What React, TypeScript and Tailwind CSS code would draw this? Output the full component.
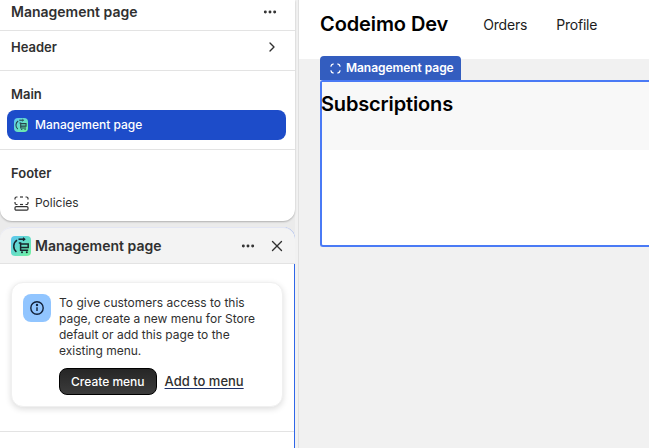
import { X, ChevronRight, MoreHorizontal } from 'lucide-react'

function AppIcon({ size, dark = false }: { size: number; dark?: boolean }) {
  const stroke = dark ? '#27424a' : '#17242b'
  return (
    <div className="flex items-center justify-center bg-gradient-to-br from-[#5cc4f0] to-[#72f29a] rounded-[4px]" style={{ width: size, height: size }}>
      <svg width={size} height={size} viewBox="0 0 20 20" fill="none" stroke={stroke} strokeWidth="1.5">
        <path d="M6 4.2a7.2 7.2 0 0 0-.6 11.6" />
        <path d="M7.5 3.2h5.5" />
        <path d="M12 1.7l1.8 1.5-1.8 1.5" strokeWidth="1.2" />
        <path d="M7.8 7h1.8v7.2h7.6" />
        <path d="M9.6 8h7.6v3.6h-7.6" />
        <circle cx="11" cy="16.2" r="1" fill={stroke} stroke="none" />
        <circle cx="15.8" cy="16.2" r="1" fill={stroke} stroke="none" />
      </svg>
    </div>
  )
}

function SectionIcon() {
  return (
    <svg width="11" height="11" viewBox="0 0 11 11" fill="none" stroke="#ffffff" strokeWidth="1.3">
      <path d="M0.8 3.6A3.4 3.4 0 0 1 3.6 0.8" />
      <path d="M7.4 0.8A3.4 3.4 0 0 1 10.2 3.6" />
      <path d="M10.2 7.4A3.4 3.4 0 0 1 7.4 10.2" />
      <path d="M3.6 10.2A3.4 3.4 0 0 1 0.8 7.4" />
    </svg>
  )
}

function FooterIcon() {
  return (
    <svg width="15" height="15" viewBox="0 0 15 15" fill="none" stroke="#303030" strokeWidth="1.2">
      <path d="M1 3.5V2.5A1.5 1.5 0 0 1 2.5 1h1" />
      <path d="M6 1h3" />
      <path d="M11.5 1h1A1.5 1.5 0 0 1 14 2.5v1" />
      <path d="M1 6v1A1.5 1.5 0 0 0 2.5 8.5h1" />
      <path d="M14 6v1a1.5 1.5 0 0 1-1.5 1.5h-1" />
      <path d="M6 8.5h3" />
      <rect x="1" y="10.6" width="13" height="3.6" rx="1.2" />
    </svg>
  )
}

export default function App() {
  return (
    <div className="flex w-[649px] h-[448px] overflow-hidden bg-[#f1f1f1] text-[#303030] font-['Inter',sans-serif]">
      <aside className="flex flex-col w-[295px] shrink-0 gap-[6px] bg-[#ebebeb]">
        <div className="bg-white rounded-b-xl h-[221px] shadow-[0_1px_2px_rgba(0,0,0,0.25)]">
          <div className="flex items-center justify-between h-[31px] pl-[11px] pr-[17px] pb-[7px] border-b border-[#e3e3e3] text-[14px] font-semibold">
            <span>Management page</span>
            <MoreHorizontal size={16} strokeWidth={2.4} />
          </div>
          <div className="flex items-start justify-between h-[40px] pl-[11px] pr-[15px] pt-[7px] border-b border-[#e3e3e3] text-[13px] font-semibold">
            <span>Header</span>
            <ChevronRight size={16} strokeWidth={2} className="mt-[1px]" />
          </div>
          <div className="h-[79px] border-b border-[#e3e3e3] pt-[14px]">
            <div className="pl-[11px] text-[13px] font-semibold leading-[18px]">Main</div>
            <div className="flex items-center gap-[7px] h-[30px] ml-[7px] mr-[9px] mt-[7px] px-[7px] rounded-lg bg-[#1d4cc9] text-white text-[12px] font-medium">
              <AppIcon size={14} dark />
              <span>Management page</span>
            </div>
          </div>
          <div className="pt-[14px]">
            <div className="pl-[11px] text-[13px] font-semibold leading-[18px]">Footer</div>
            <div className="flex items-center gap-[6px] h-[30px] mt-[6px] pl-[14px] text-[12px] font-normal">
              <FooterIcon />
              <span>Policies</span>
            </div>
          </div>
        </div>

        <div className="flex-1 flex flex-col bg-white rounded-t-xl border-r border-[#2f66e8] min-h-0">
          <div className="flex items-center justify-between h-[37px] shrink-0 -mr-[1px] pl-[11px] pr-[9px] bg-[#f3f3f3] rounded-t-xl border-t border-t-[#e2e5f3] border-b border-b-[#e3e3e3]">
            <div className="flex items-center gap-[4px] text-[14px] font-semibold">
              <AppIcon size={20} />
              <span>Management page</span>
            </div>
            <div className="flex items-center gap-[12px]">
              <MoreHorizontal size={16} strokeWidth={2.4} />
              <X size={18} strokeWidth={1.8} />
            </div>
          </div>
          <div className="h-[168px] shrink-0 border-b border-[#e3e3e3] pt-[18px] px-[11px]">
            <div className="flex gap-[8px] h-[125px] w-[272px] pl-[11px] pt-[11px] bg-white rounded-xl border border-[#f0f0f0] shadow-[0_2px_6px_rgba(0,0,0,0.14)]">
              <div className="flex items-center justify-center w-[28px] h-[28px] shrink-0 bg-[#91c5ff] rounded-lg">
                <svg width="16" height="16" viewBox="0 0 16 16" fill="none" stroke="#12213a" strokeWidth="1.4">
                  <circle cx="8" cy="8" r="6.2" />
                  <path d="M8 7.3v3.6" />
                  <circle cx="8" cy="5" r="0.5" fill="#12213a" />
                </svg>
              </div>
              <div className="mt-[1px]">
                <p className="text-[12px] leading-[16px] w-[205px]">
                  To give customers access to this page, create a new menu for Store default or add this page to the existing menu.
                </p>
                <div className="flex items-center gap-[8px] mt-[9px]">
                  <button className="h-[27px] px-[11px] rounded-lg text-white text-[12px] font-medium border border-black bg-gradient-to-b from-[#262626] to-[#3c3c3c]">
                    Create menu
                  </button>
                  <a className="text-[13px] font-medium underline underline-offset-2 decoration-[#1c2f66]">Add to menu</a>
                </div>
              </div>
            </div>
          </div>
        </div>
      </aside>

      <main className="flex-1 flex flex-col min-w-0 ml-[3px] border-l border-[#e0e0e0]">
        <header className="flex items-center h-[59px] pb-[11px] shrink-0 bg-white pl-[21px] text-black">
          <span className="text-[20px] leading-[28px] font-semibold tracking-[-0.1px]">Codeimo Dev</span>
          <nav className="flex gap-[29px] ml-[35px] text-[14px] text-[#1c1c1c] tracking-[-0.2px]">
            <span>Orders</span>
            <span>Profile</span>
          </nav>
        </header>
        <div className="pl-[21px] -mt-[3px] relative">
          <div className="flex items-center gap-[5px] w-[141px] h-[24px] pl-[10px] rounded-t-[4px] bg-[#335dbf] text-white text-[12px] font-semibold">
            <SectionIcon />
            <span className="tracking-[-0.05px]">Management page</span>
          </div>
          <div className="h-[167px] border-2 border-r-0 border-[#4a7af5] rounded-l-[3px] bg-white">
            <div className="h-[68px] bg-[#f8f8f8] text-[20px] font-semibold text-black leading-[28px] pt-[8px] tracking-[-0.15px]">
              <span className="block -ml-[1px]">Subscriptions</span>
            </div>
          </div>
        </div>
      </main>
    </div>
  )
}
